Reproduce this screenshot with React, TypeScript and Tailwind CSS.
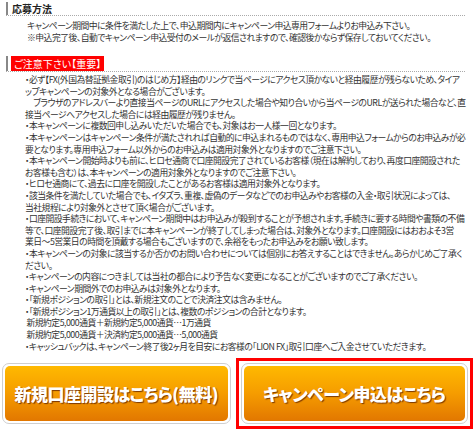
const notes: string[][] = [
  [
    '・必ず【FX(外国為替証拠金取引)のはじめ方】経由のリンクで当ページにアクセス頂かないと経由履歴が残らないため、タイア',
    'ップキャンペーンの対象外となる場合がございます。',
    '\u3000ブラウザのアドレスバーより直接当ページのURLにアクセスした場合や知り合いから当ページのURLが送られた場合など、直',
    '接当ページへアクセスした場合には経由履歴が残りません。',
  ],
  ['・本キャンペーンに複数回申し込みいただいた場合でも、対象はお一人様一回となります。'],
  [
    '・本キャンペーンはキャンペーン条件が満たされれば自動的に申込まれるものではなく、専用申込フォームからのお申込みが必',
    '要となります。専用申込フォーム以外からのお申込みは適用対象外となりますのでご注意下さい。',
  ],
  [
    '・本キャンペーン開始時よりも前に、ヒロセ通商で口座開設完了されているお客様（現在は解約しており、再度口座開設された',
    'お客様も含む）は、本キャンペーンの適用対象外となりますのでご注意下さい。',
  ],
  ['・ヒロセ通商にて、過去に口座を開設したことがあるお客様は適用対象外となります。'],
  [
    '・該当条件を満たしていた場合でも、イタズラ、重複、虚偽のデータなどでのお申込みやお客様の入金・取引状況によっては、',
    '当社規程により対象外とさせて頂く場合がございます。',
  ],
  [
    '・口座開設手続きにおいて、キャンペーン期間中はお申込みが殺到することが予想されます。手続きに要する時間や書類の不備',
    '等で、口座開設完了後、取引までに本キャンペーンが終了してしまった場合は、対象外となります。口座開設にはおおよそ3営',
    '業日～5営業日の時間を頂戴する場合もございますので、余裕をもったお申込みをお願い致します。',
  ],
  [
    '・本キャンペーンの対象に該当するか否かのお問い合わせについては個別にお答えすることはできません。あらかじめご了承く',
    'ださい。',
  ],
  ['・キャンペーンの内容につきましては当社の都合により予告なく変更になることがございますのでご了承ください。'],
  ['・キャンペーン期間外でのお申込みは対象外となります。'],
  ['・「新規ポジションの取引」とは、新規注文のことで決済注文は含みません。'],
  [
    '・「新規ポジション1万通貨以上の取引」とは、複数のポジションの合計となります。',
    '\u00a0新規約定5,000通貨＋新規約定5,000通貨…1万通貨',
    '\u00a0新規約定5,000通貨＋決済約定5,000通貨…5,000通貨',
  ],
  ['・キャッシュバックは、キャンペーン終了後2ヶ月を目安にお客様の「LION FX」取引口座へご入金させていただきます。'],
];

function OrangeButton({ label }: { label: string }) {
  return (
    <a
      href="#"
      className="flex h-[61px] w-full items-center justify-center rounded-[7px] border border-[#cfcfcf] bg-white p-[2px]"
    >
      <span className="flex h-full w-full items-center justify-center rounded-[5px] bg-gradient-to-b from-[#ffb900] via-[#f59c00] to-[#e27700] text-[17px] font-extrabold tracking-[-0.5px] text-white [text-shadow:1px_1px_1px_rgba(110,45,0,0.9)]">
        {label}
      </span>
    </a>
  );
}

export default function App() {
  return (
    <div className="h-[432px] w-[474px] overflow-hidden bg-white text-[#333] [font-family:'Noto_Sans_CJK_JP',sans-serif] [font-feature-settings:'palt']">
      <div className="pl-[6px] pr-[9px] pt-[2px]">
        {/* 応募方法 */}
        <div className="flex h-[14px] items-stretch border-b border-dotted border-[#aaa]">
          <div className="w-[2px] bg-[#888]" />
          <h3 className="pl-[4px] text-[10px] font-bold leading-[13px] text-[#222]">応募方法</h3>
        </div>
        <div className="whitespace-nowrap pl-[21px] pt-[4px] text-[8.8px] leading-[12px] tracking-[-0.5px]">
          <p>キャンペーン期間中に条件を満たした上で、申込期間内にキャンペーン申込専用フォームよりお申込み下さい。</p>
          <p>※申込完了後、自動でキャンペーン申込受付のメールが返信されますので、確認後かならず保存しておいてください。</p>
        </div>

        {/* ご注意下さい */}
        <div className="mt-[12px] flex h-[16px] items-stretch border-b border-dotted border-[#aaa]">
          <div className="w-[2px] bg-[#888]" />
          <h3 className="ml-[3px] bg-[#f00] px-[3px] text-[10px] leading-[16px] text-white">ご注意下さい【重要】</h3>
        </div>
        <div className="whitespace-nowrap pl-[19px] pt-[2px] text-[8.8px] leading-[11.6px] tracking-[-0.5px]">
          {notes.map((lines, i) => (
            <p key={i}>
              {lines.map((line, j) => (
                <span key={j} className="block">
                  {line}
                </span>
              ))}
            </p>
          ))}
        </div>
      </div>

      {/* Buttons */}
      <div className="mt-[6px] flex items-center gap-[5px] pl-[2px] pr-[1px]">
        <div className="w-[229px]">
          <OrangeButton label="新規口座開設はこちら(無料)" />
        </div>
        <div className="w-[238px] border-[3px] border-[#f00] p-[2px]">
          <OrangeButton label="キャンペーン申込はこちら" />
        </div>
      </div>
    </div>
  );
}
